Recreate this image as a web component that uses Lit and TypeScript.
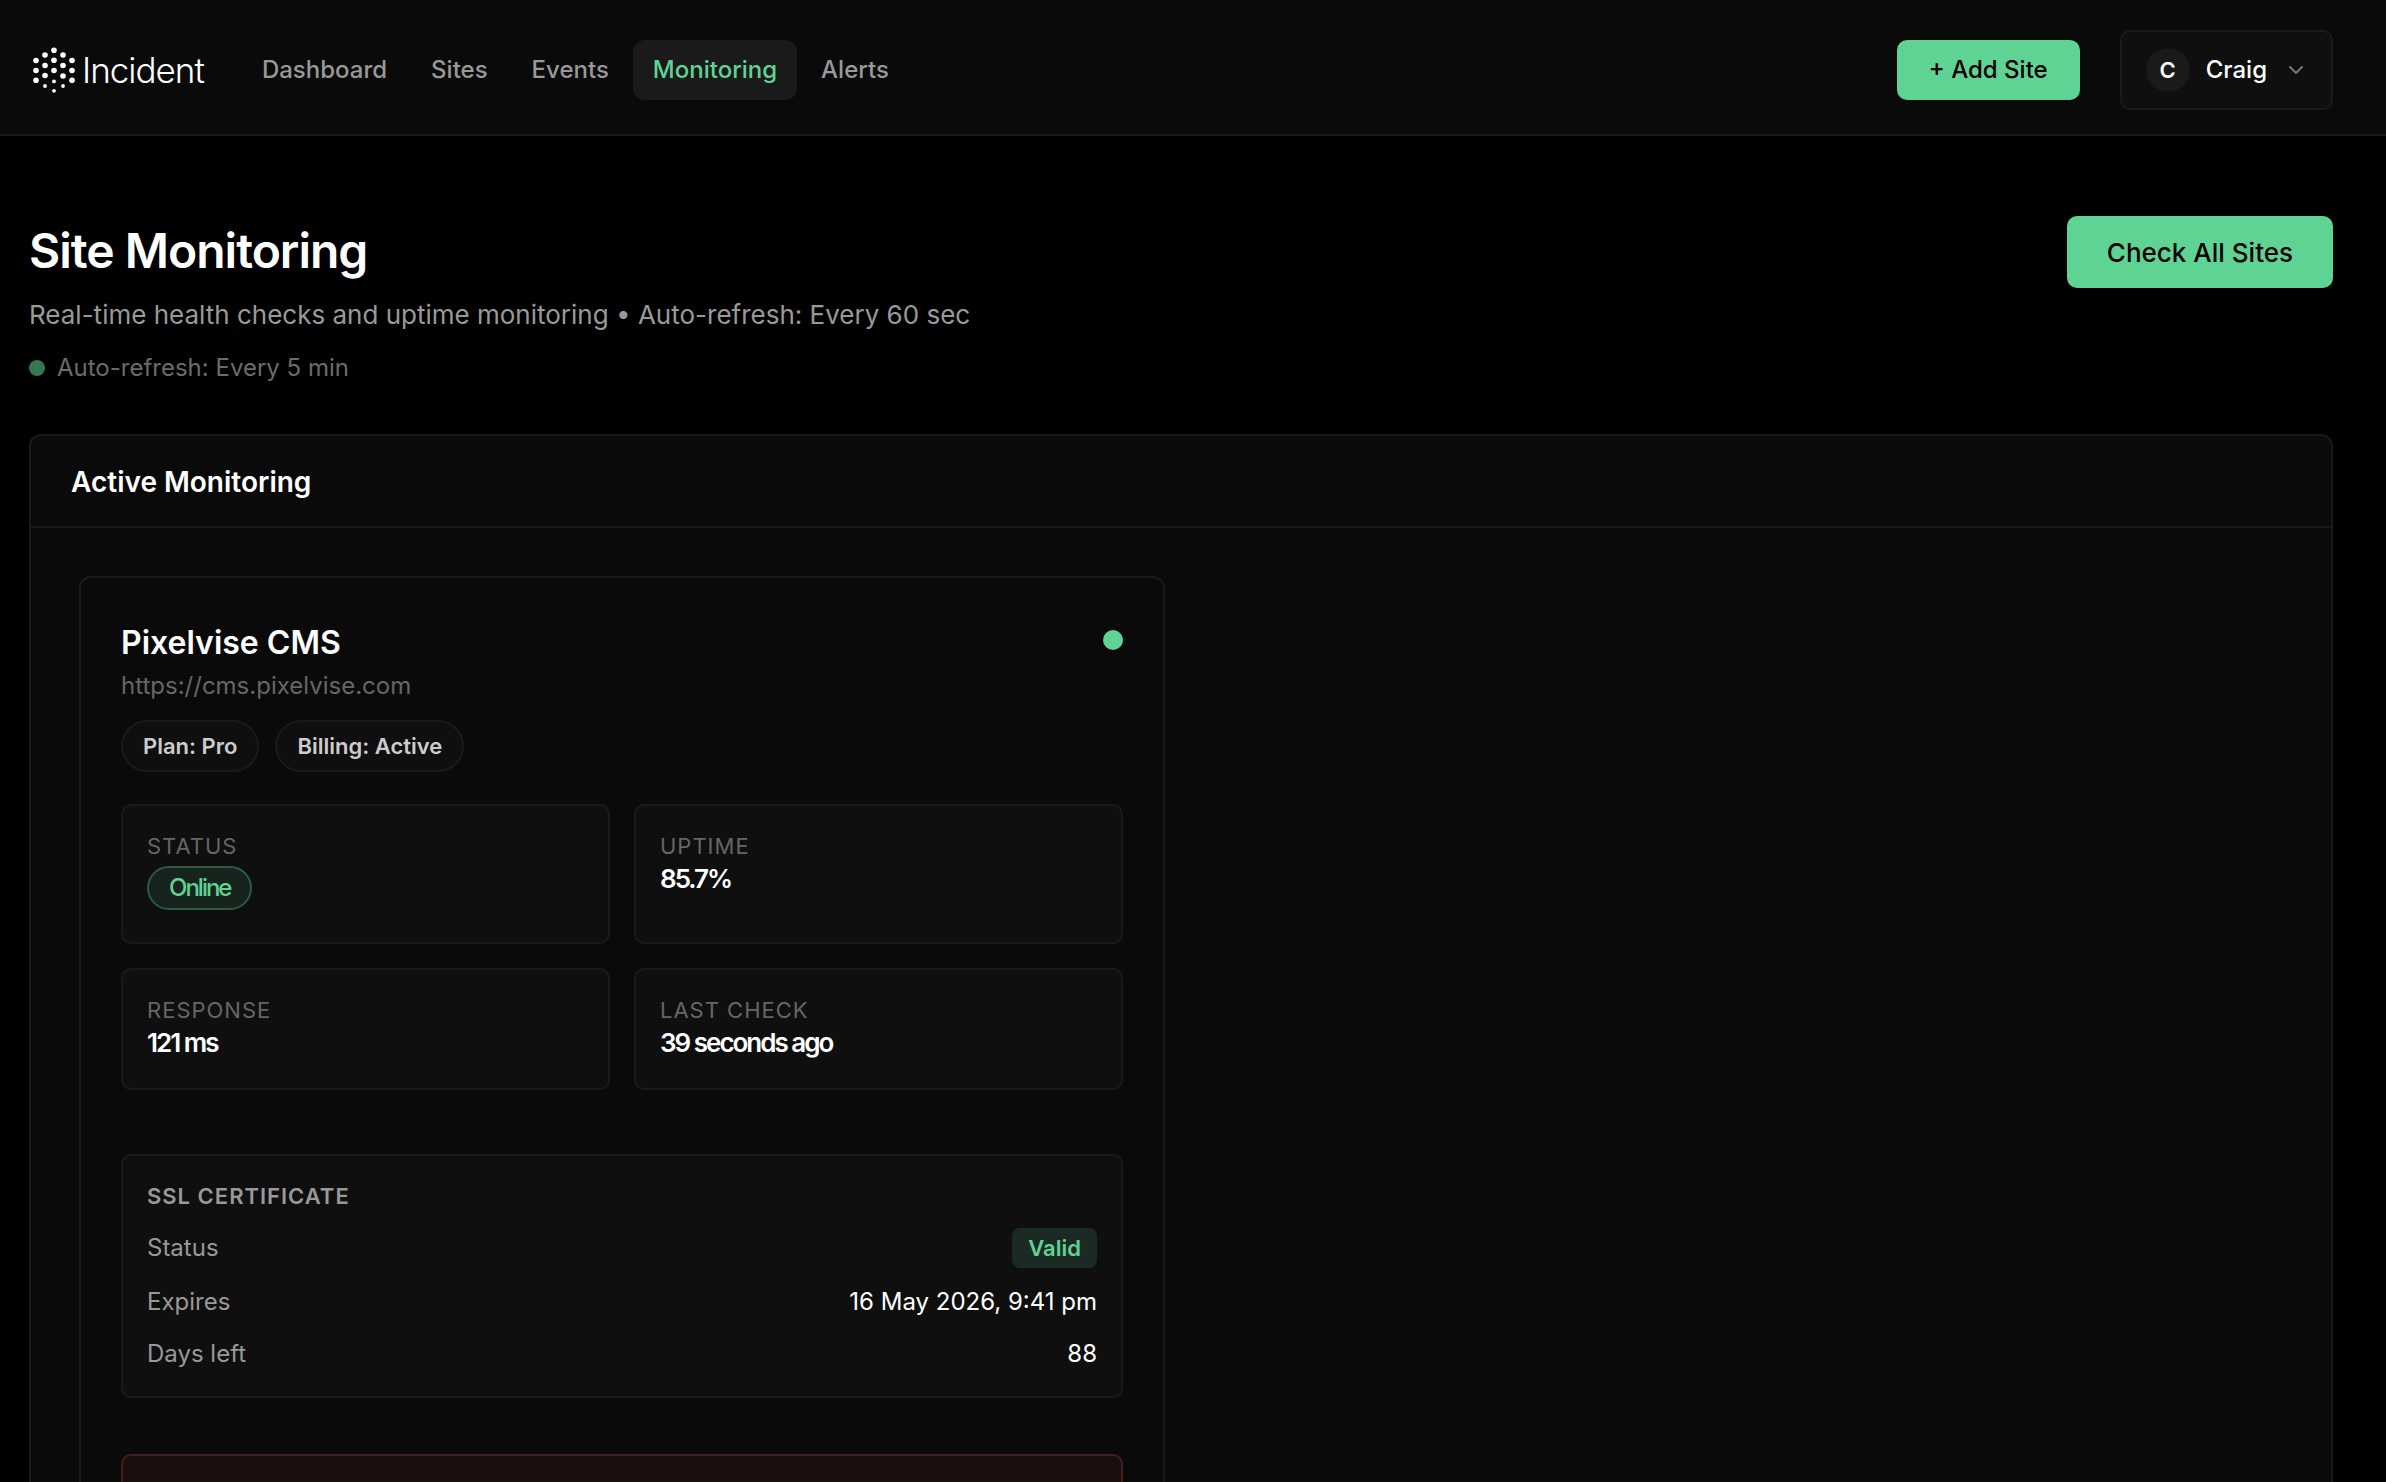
import { LitElement, html, svg, css } from "lit";
import { customElement, property } from "lit/decorators.js";
import { classMap } from "lit/directives/class-map.js";

interface Dot {
  x: number;
  y: number;
  r: number;
}

const LOGO_DOTS: Dot[] = [
  { x: 4, y: 14.5, r: 2.8 },
  { x: 4, y: 24.5, r: 2.8 },
  { x: 4, y: 34.3, r: 2.8 },
  { x: 13, y: 9, r: 2.8 },
  { x: 13, y: 19.5, r: 2.8 },
  { x: 13, y: 29.5, r: 2.8 },
  { x: 13, y: 40, r: 1.9 },
  { x: 22, y: 4.3, r: 2.8 },
  { x: 22, y: 14.3, r: 2.8 },
  { x: 22, y: 24.5, r: 2.8 },
  { x: 22, y: 35.4, r: 1.9 },
  { x: 22, y: 44.8, r: 1.9 },
  { x: 31, y: 9, r: 2.8 },
  { x: 31, y: 19.5, r: 2.8 },
  { x: 31, y: 30, r: 2.8 },
  { x: 31, y: 40, r: 1.9 },
  { x: 40, y: 14.5, r: 2.8 },
  { x: 40, y: 24.5, r: 2.8 },
  { x: 40, y: 34.3, r: 2.8 },
];

const NAV = ["Dashboard", "Sites", "Events", "Monitoring", "Alerts"];

@customElement("site-header")
export class SiteHeader extends LitElement {
  @property() active = "Monitoring";

  static styles = css`
    :host {
      display: block;
    }
    .bar {
      display: flex;
      align-items: center;
      padding: 30px 53px 24px 32px;
      border-bottom: 2px solid #1a1a1a;
      background: #0a0a0a;
    }
    .logo {
      display: flex;
      align-items: center;
      gap: 4px;
      color: #fff;
      text-decoration: none;
      font-size: 35px;
      line-height: 48px;
      font-weight: 300;
      letter-spacing: -1px;
    }
    .nav {
      display: flex;
      gap: 4px;
      margin-left: 38px;
      flex: 1;
    }
    .link {
      padding: 12px 20px;
      border-radius: 12px;
      color: #999;
      font-size: 24px;
      line-height: 36px;
      font-weight: 500;
      text-decoration: none;
    }
    .current {
      color: #5fd394;
      background: #1a1a1a;
    }
    button {
      font-family: inherit;
      font-size: 24px;
      line-height: 36px;
      font-weight: 500;
      cursor: pointer;
    }
    .add {
      padding: 12px 32px;
      border: 0;
      border-radius: 10px;
      background: #5fd394;
      color: #000;
    }
    .user {
      display: flex;
      align-items: center;
      gap: 16px;
      margin-left: 40px;
      padding: 16px 24px;
      border: 2px solid #1a1a1a;
      border-radius: 10px;
      background: #0f0f0f;
      color: #fff;
    }
    .avatar {
      width: 44px;
      line-height: 44px;
      border-radius: 50%;
      background: #1a1a1a;
      text-align: center;
      font-size: 22px;
      font-weight: 600;
    }
  `;

  render() {
    return html`
      <header class="bar">
        <a class="logo" href="#">
          <svg width="46" height="48" viewBox="0 0 46 48" fill="currentColor" aria-hidden="true">
            ${LOGO_DOTS.map((d) => svg`<circle cx=${d.x} cy=${d.y} r=${d.r} />`)}
          </svg>
          <span>Incident</span>
        </a>
        <nav class="nav">
          ${NAV.map(
            (n) => html`<a class=${classMap({ link: true, current: n === this.active })} href="#">${n}</a>`
          )}
        </nav>
        <button class="add" type="button">+ Add Site</button>
        <button class="user" type="button">
          <span class="avatar">C</span>
          <span>Craig</span>
          <svg width="24" height="24" viewBox="0 0 24 24" fill="none" stroke="#777" stroke-width="2" stroke-linecap="round" stroke-linejoin="round" aria-hidden="true">
            <path d="M7 9l6 6 6-6" />
          </svg>
        </button>
      </header>
    `;
  }
}

@customElement("site-card")
export class SiteCard extends LitElement {
  static styles = css`
    :host {
      display: block;
    }
    .card {
      padding: 40px;
      border: 2px solid #1a1a1a;
      border-radius: 12px;
      background: #0a0a0a;
    }
    .top {
      display: flex;
      justify-content: space-between;
      align-items: flex-start;
    }
    .name {
      margin: 0;
      color: #fff;
      font-size: 32px;
      line-height: 50px;
      font-weight: 600;
    }
    .url {
      display: block;
      color: #666;
      font-size: 24px;
      line-height: 36px;
      text-decoration: none;
    }
    .dot {
      width: 20px;
      height: 20px;
      margin-top: 12px;
      border-radius: 50%;
      background: #5fd394;
    }
    .tags {
      display: flex;
      gap: 16px;
      margin: 16px 0 32px;
    }
    .tag {
      padding: 8px 20px;
      border: 2px solid #1a1a1a;
      border-radius: 26px;
      background: #0f0f0f;
      color: #ccc;
      font-size: 22px;
      line-height: 32px;
      font-weight: 600;
    }
    .metrics {
      display: grid;
      grid-template-columns: 1fr 1fr;
      gap: 24px;
      margin: 0 0 64px;
    }
    .tile,
    .ssl {
      border: 2px solid #1a1a1a;
      border-radius: 10px;
      background: #0f0f0f;
    }
    .tile {
      padding: 24px 24px 28px;
    }
    .label,
    .heading {
      font-size: 22px;
      line-height: 32px;
      letter-spacing: 1px;
      text-transform: uppercase;
    }
    .label {
      color: #666;
    }
    .value {
      margin: 0;
      color: #fff;
      font-size: 26px;
      line-height: 34px;
      font-weight: 600;
      letter-spacing: -2px;
    }
    .online {
      display: block;
      width: fit-content;
      margin: 4px 0;
      padding: 0 20px;
      border: 2px solid #2c5a42;
      border-radius: 22px;
      background: #17231d;
      color: #5fd394;
      font-size: 24px;
      line-height: 40px;
      font-weight: 500;
    }
    .ssl {
      padding: 24px;
    }
    .heading {
      margin: 0;
      color: #999;
      font-weight: 600;
    }
    .rows {
      display: grid;
      gap: 16px;
      margin: 16px 0 0;
    }
    .row {
      display: flex;
      justify-content: space-between;
      align-items: center;
      color: #999;
      font-size: 24px;
      line-height: 36px;
    }
    .data {
      margin: 0;
      color: #fff;
    }
    .valid {
      display: block;
      padding: 0 16px;
      border-radius: 8px;
      background: #1b2b23;
      color: #5fd394;
      font-size: 22px;
      line-height: 40px;
      font-weight: 600;
    }
    .alert {
      min-height: 120px;
      margin-top: 56px;
      border: 2px solid #471c1c;
      border-radius: 10px;
      background: #1a0f0e;
    }
  `;

  render() {
    return html`
      <article class="card">
        <div class="top">
          <div>
            <h3 class="name">Pixelvise CMS</h3>
            <a class="url" href="#">https://cms.pixelvise.com</a>
          </div>
          <span class="dot"></span>
        </div>
        <div class="tags">
          <span class="tag">Plan: Pro</span>
          <span class="tag">Billing: Active</span>
        </div>
        <dl class="metrics">
          <div class="tile">
            <dt class="label">Status</dt>
            <dd class="value"><span class="online">Online</span></dd>
          </div>
          <div class="tile">
            <dt class="label">Uptime</dt>
            <dd class="value">85.7%</dd>
          </div>
          <div class="tile">
            <dt class="label">Response</dt>
            <dd class="value">121 ms</dd>
          </div>
          <div class="tile">
            <dt class="label">Last check</dt>
            <dd class="value">39 seconds ago</dd>
          </div>
        </dl>
        <section class="ssl">
          <h4 class="heading">SSL Certificate</h4>
          <dl class="rows">
            <div class="row">
              <dt>Status</dt>
              <dd class="data"><span class="valid">Valid</span></dd>
            </div>
            <div class="row">
              <dt>Expires</dt>
              <dd class="data">16 May 2026, 9:41 pm</dd>
            </div>
            <div class="row">
              <dt>Days left</dt>
              <dd class="data">88</dd>
            </div>
          </dl>
        </section>
        <section class="alert"></section>
      </article>
    `;
  }
}

@customElement("app-root")
export class AppRoot extends LitElement {
  static styles = css`
    :host {
      display: block;
      height: 100vh;
      overflow: hidden;
      background: #000;
      font-family: Inter, "Liberation Sans", sans-serif;
    }
    .main {
      padding: 80px 53px 80px 29px;
    }
    .intro {
      display: flex;
      justify-content: space-between;
      align-items: flex-start;
    }
    .title {
      margin: 0;
      color: #fff;
      font-size: 48px;
      line-height: 70px;
      font-weight: 600;
      letter-spacing: -1px;
    }
    .subtitle {
      margin: 8px 0 14px;
      color: #999;
      font-size: 26px;
      line-height: 42px;
    }
    .refresh {
      display: flex;
      align-items: center;
      gap: 12px;
      margin: 0;
      color: #6b6b6b;
      font-size: 24px;
      line-height: 36px;
    }
    .pulse {
      width: 16px;
      height: 16px;
      border-radius: 50%;
      background: #35774f;
    }
    .check {
      padding: 18px 40px 16px;
      border: 0;
      border-radius: 10px;
      background: #5fd394;
      color: #000;
      font-family: inherit;
      font-size: 26px;
      line-height: 38px;
      font-weight: 500;
      cursor: pointer;
    }
    .panel {
      margin-top: 48px;
      border: 2px solid #1a1a1a;
      border-radius: 12px;
      background: #0a0a0a;
    }
    .heading {
      margin: 0;
      padding: 26px 40px 24px;
      border-bottom: 2px solid #1a1a1a;
      color: #fff;
      font-size: 28px;
      line-height: 40px;
      font-weight: 600;
    }
    .grid {
      display: grid;
      grid-template-columns: 1fr 1fr;
      gap: 32px;
      padding: 48px;
    }
  `;

  render() {
    return html`
      <site-header></site-header>
      <main class="main">
        <div class="intro">
          <div>
            <h1 class="title">Site Monitoring</h1>
            <p class="subtitle">Real-time health checks and uptime monitoring • Auto-refresh: Every 60 sec</p>
            <p class="refresh"><span class="pulse"></span>Auto-refresh: Every 5 min</p>
          </div>
          <button class="check" type="button">Check All Sites</button>
        </div>
        <section class="panel">
          <h2 class="heading">Active Monitoring</h2>
          <div class="grid"><site-card></site-card></div>
        </section>
      </main>
    `;
  }
}
